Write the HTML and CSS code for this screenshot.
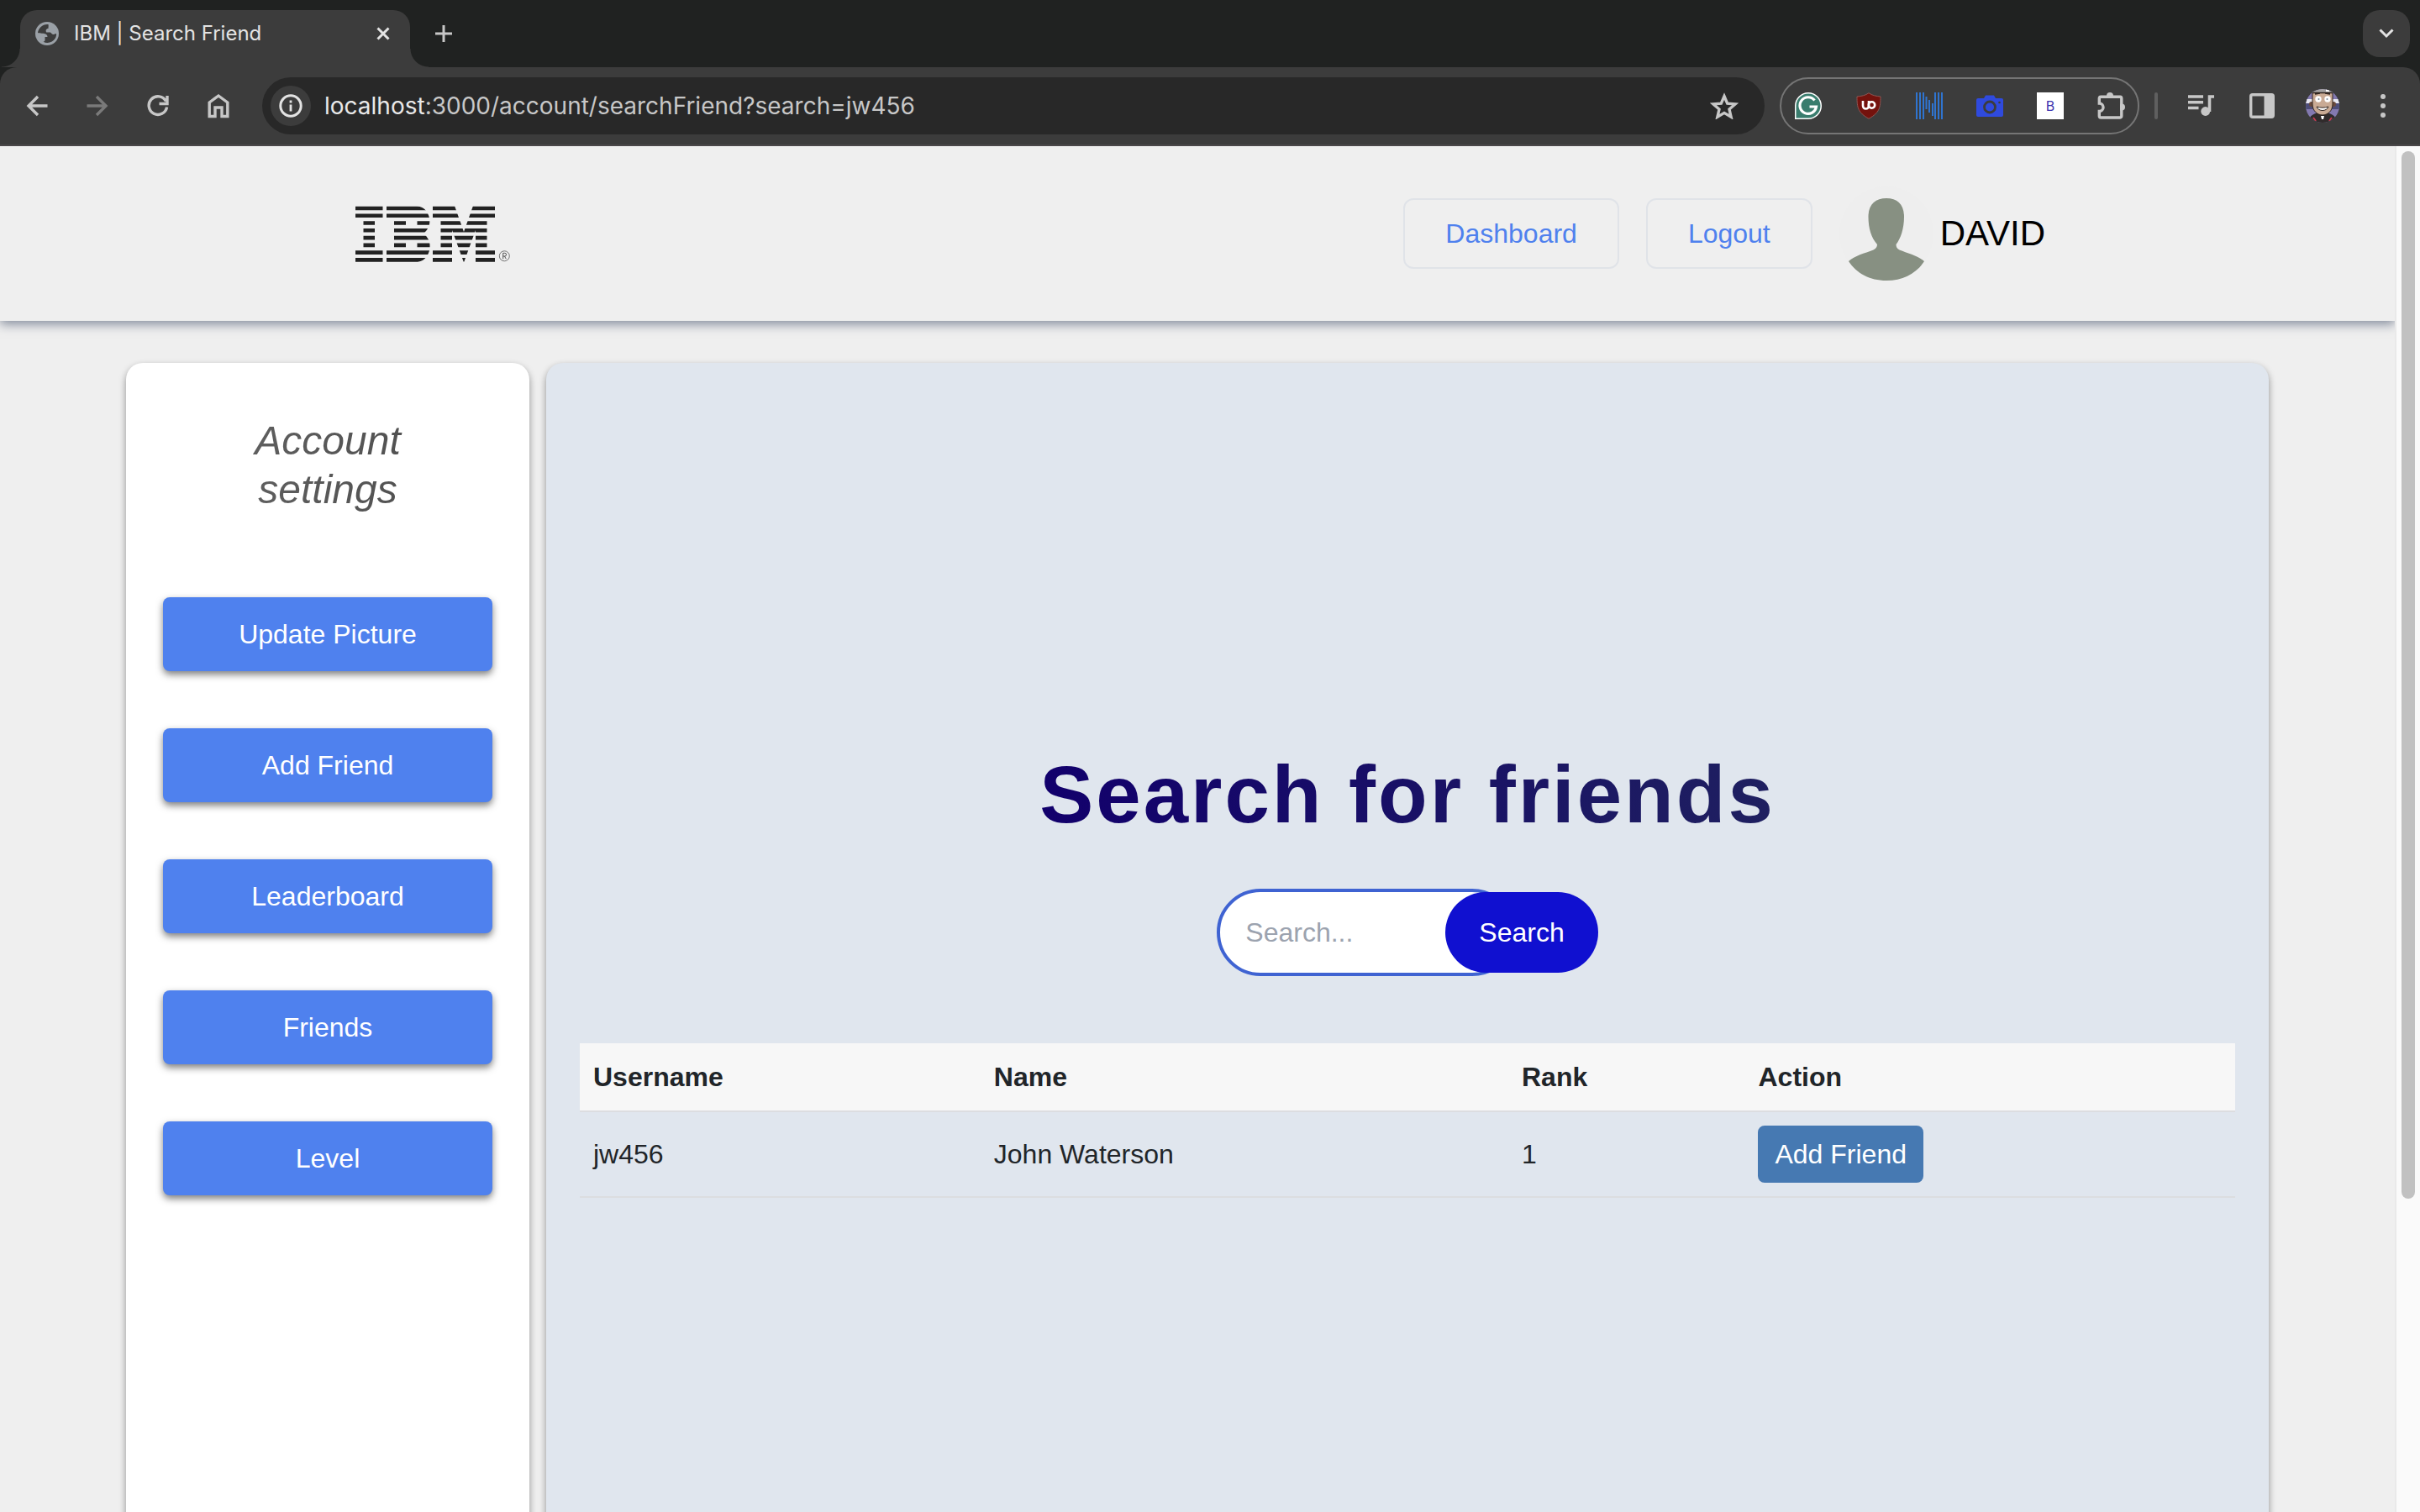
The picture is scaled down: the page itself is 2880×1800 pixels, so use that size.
FILE: index.html
```html
<!DOCTYPE html>
<html lang="en">
<head>
<meta charset="utf-8">
<meta name="viewport" content="width=device-width, initial-scale=1">
<title>IBM | Search Friend</title>
<link rel="stylesheet" href="styles.css">
</head>
<body>
<div class="browser">
  <div class="tabstrip">
    <div class="tab">
      <svg class="tab-icon" viewBox="0 0 28 28" aria-hidden="true"><circle cx="14" cy="14" r="14" fill="#9aa0a6"/><path d="M15.500 3C9 2.300 3.800 7 3 13c2 .8 4.500 .6 6.500 .8 3 .2 5 1.600 5 4.200h-3v3.500c0 1.500-.8 2-2 2.300 5 2.700 11.500 .700 14.300-4.200 1-1.800 1.400-3.800 1.200-5.600-1.500 0-2 1-3.200 1-2.600 0-2.600-2.500-4.600-2.500h-4c-1.500-3 .3-4.500 2.300-4.500 0-2 .5-3.500 0-5z" fill="#3c3c3c"/></svg>
      <span class="tab-title">IBM | Search Friend</span>
      <button class="chrome-btn tab-close" aria-label="Close tab"><svg width="16" height="16" viewBox="0 0 16 16"><path d="M1.500 1.500l13 13M14.500 1.500l-13 13" stroke="#e3e3e3" stroke-width="3"/></svg></button>
    </div>
    <button class="chrome-btn new-tab" aria-label="New tab"><svg width="20" height="20" viewBox="0 0 20 20"><path d="M10 0v20M0 10h20" stroke="#c7c7c7" stroke-width="3"/></svg></button>
    <button class="chrome-btn tab-search" aria-label="Search tabs"><svg width="18" height="12" viewBox="0 0 18 12"><path d="M1.500 1.500L9 9l7.500-7.500" fill="none" stroke="#e3e3e3" stroke-width="3"/></svg></button>
  </div>

  <div class="toolbar">
    <div class="nav-buttons">
      <button class="chrome-btn nav" aria-label="Back"><svg width="26" height="26" viewBox="0 0 26 26"><path d="M25.500 13H3M14 2L3 13l11 11" fill="none" stroke="#c7c7c7" stroke-width="3.400"/></svg></button>
      <button class="chrome-btn nav" aria-label="Forward"><svg width="26" height="26" viewBox="0 0 26 26"><path d="M.5 13H23M12 2l11 11-11 11" fill="none" stroke="#7a7a7a" stroke-width="3.400"/></svg></button>
      <button class="chrome-btn nav" aria-label="Reload"><svg width="26" height="26" viewBox="0 0 26 26"><path d="M22.500 7.500A10.800 10.800 0 1 0 23.600 14.500M24 1v9.500H14.500" fill="none" stroke="#c7c7c7" stroke-width="3.400"/></svg></button>
      <button class="chrome-btn nav" aria-label="Home"><svg width="26" height="30" viewBox="0 0 26 30"><path d="M2.200 27.500V11L13 3l10.800 8v16.500H17V17H9v10.500z" fill="none" stroke="#c7c7c7" stroke-width="3.400"/></svg></button>
    </div>
    <div class="omnibox">
      <button class="chrome-btn site-info" aria-label="Site information"><svg width="28" height="28" viewBox="0 0 28 28"><circle cx="14" cy="14" r="12.200" fill="none" stroke="#e3e3e3" stroke-width="3"/><path d="M14 12.500v8M14 7.500v3" stroke="#e3e3e3" stroke-width="2.800"/></svg></button>
      <span class="url"><b>localhost</b>:3000/account/searchFriend?search=jw456</span>
      <button class="chrome-btn star" aria-label="Bookmark"><svg width="34" height="32" viewBox="0 0 34 32"><path d="M17 4.500l3.700 8.600 9.300.8-7 6.200 2.100 9.100L17 24.400l-8.100 4.800L11 20.100l-7-6.200 9.300-.8z" fill="none" stroke="#c7c7c7" stroke-width="3.400"/></svg></button>
    </div>
    <div class="extensions">
      <svg viewBox="0 0 32 32" aria-hidden="true"><path d="M0 32V16A16 16 0 1 1 16 32z" fill="#fff"/><path d="M1.500 30.500V16A14.500 14.500 0 1 1 16 30.500z" fill="#3a7d6e"/><path d="M23.500 9.500A9.800 9.800 0 1 0 25.500 17H17.500" fill="none" stroke="#fff" stroke-width="3.200"/></svg>
      <svg viewBox="0 0 32 32" aria-hidden="true"><path d="M16 .7c4 3 9 3.800 14 4.300 0 13-1 19-14 26.300C3 24 2 18 2 5c5-.5 10-1.300 14-4.300z" fill="#74120d" stroke="#8d5653" stroke-width="1"/><path d="M9 10v6a3.500 3.500 0 0 0 7 0v-6" fill="none" stroke="#fff" stroke-width="2.600"/><circle cx="19.500" cy="15" r="3.700" fill="none" stroke="#fff" stroke-width="2.600"/></svg>
      <svg viewBox="0 0 32 32" aria-hidden="true"><path d="M1 0v32M5 0v32M9 0v32M12.500 5v15M16 9v15M20 13v15M23 0v32M27 0v32M31 0v32" stroke="#2f74d0" stroke-width="2"/></svg>
      <svg viewBox="0 0 32 32" aria-hidden="true"><path d="M2 7h7l2-3.500h10L23 7h7a2 2 0 0 1 2 2v18a2 2 0 0 1-2 2H2a2 2 0 0 1-2-2V9a2 2 0 0 1 2-2z" fill="#2f4ade"/><circle cx="16" cy="17.500" r="6.500" fill="none" stroke="#3c3c3c" stroke-width="2.800"/><circle cx="27.500" cy="12" r="1.300" fill="#3c3c3c"/></svg>
      <span class="ext-b">B</span>
      <svg class="puzzle" viewBox="0 0 34 34" aria-hidden="true"><path d="M11 5a4 4 0 0 1 8 0v2h-8zM29 14.500a4 4 0 0 1 0 8h-2v-8z" fill="#c7c7c7"/><path d="M4.200 6.200H27a2 2 0 0 1 1.800 2V29a2 2 0 0 1-1.800 2H4.200a2 2 0 0 1-1.900-2v-5.500a4.700 4.700 0 0 0 0-9.500V8.200a2 2 0 0 1 1.900-2z" fill="none" stroke="#c7c7c7" stroke-width="3.400"/></svg>
    </div>
    <span class="divider"></span>
    <div class="tools">
      <button class="chrome-btn" aria-label="Media"><svg width="32" height="26" viewBox="0 0 32 26"><path d="M0 2h18M0 8.800h18M0 15.500h12.500M25.500 20V2H31" fill="none" stroke="#c7c7c7" stroke-width="3.600"/><circle cx="20.700" cy="19.500" r="5.400" fill="#c7c7c7"/></svg></button>
      <button class="chrome-btn" aria-label="Side panel"><svg width="30" height="30" viewBox="0 0 30 30"><rect x="1.700" y="1.700" width="26.600" height="26.600" rx="2" fill="none" stroke="#c7c7c7" stroke-width="3.400"/><path d="M17.500 2H28v26H17.500z" fill="#c7c7c7"/></svg></button>
      <button class="chrome-btn" aria-label="Profile"><svg width="40" height="40" viewBox="0 0 40 40"><clipPath id="face"><circle cx="20" cy="20" r="20"/></clipPath><g clip-path="url(#face)"><path d="M0 0h40v40H0z" fill="#8379b0"/><path d="M0 12h40v5H0z" fill="#e8e8f2"/><path d="M0 17h40v7H0z" fill="#4d4d78"/><path d="M3 40c1-9 7-12 17-12s16 3 17 12z" fill="#302b2b"/><circle cx="7" cy="18" r="3" fill="#6a4a3d"/><circle cx="33" cy="18" r="3" fill="#6a4a3d"/><path d="M8 4h24v14c0 8-6 13-12 13S8 26 8 18z" fill="#c9aa94" stroke="#30251f" stroke-width="1"/><path d="M8 0h24v4H8z" fill="#a5a3a3"/><path d="M24 0h4v3h-4z" fill="#fff"/><path d="M8 4.500h24M11 6l6-1M23 5l6 1" stroke="#30251f" stroke-width="1.500"/><circle cx="15" cy="12" r="3.700" fill="#fff"/><circle cx="26" cy="12" r="3.700" fill="#fff"/><circle cx="15.500" cy="12" r="1" fill="#789"/><circle cx="25.500" cy="12" r="1" fill="#789"/><path d="M13 21c5 1.500 9 1.500 14 0-1 3-4 4.500-7 4.500s-6-1.500-7-4.500z" fill="#fff" stroke="#30251f" stroke-width="1"/><path d="M18 32h4l-1 4h-2z" fill="#fff"/><path d="M9 34l3 4M31 34l-3 4" stroke="#c33d50" stroke-width="2"/></g></svg></button>
      <button class="chrome-btn" aria-label="Menu"><svg width="6" height="28" viewBox="0 0 6 28"><g fill="#c7c7c7"><circle cx="3" cy="3" r="3"/><circle cx="3" cy="14" r="3"/><circle cx="3" cy="25" r="3"/></g></svg></button>
    </div>
  </div>

  <div class="viewport">
    <div class="page">
      <header class="site-header">
        <a class="brand" href="#" aria-label="IBM"><svg width="186" height="68" viewBox="0 0 186 68">
          <defs>
            <clipPath id="stripes"><path d="M0 1.700h170v4.600H0zM0 10.400h170V15H0zM0 19.200h170v4.600H0zM0 28h170v4.600H0zM0 36.800h170v4.600H0zM0 45.600h170v4.600H0zM0 54.300h170v4.700H0zM0 63.100h170v4.600H0z"/></clipPath>
          </defs>
          <g clip-path="url(#stripes)" fill="#222">
            <path d="M0 0h32.500v17H23v35h9.500v16H0V52h9.500V17H0z"/>
            <path fill-rule="evenodd" d="M37 1h36c6 1 11 4 13 9 2 4 2.500 7 2.300 11-.3 5-3 9-7 13 4 4 7 8 7.200 13 .3 5-.3 9-3.500 14-3 4-6 6-11 7H37V52h9V17h-9zM60 17h13.500v9H60zM60 43h13.500v9H60z"/>
            <path d="M92 1h26l11 31L140 1h26v16h-9.500v35h9.500v16h-23V30l-14 38.500L115 30v38H92V52h9.500V17H92z"/>
          </g>
          <circle cx="177.300" cy="60.800" r="6" fill="none" stroke="#555" stroke-width=".8"/>
          <path d="M175.700 64.300v-7h2a1.800 1.800 0 0 1 0 3.700h-2M177.500 61l1.800 3.300" fill="none" stroke="#444" stroke-width=".9"/>
        </svg></a>
        <nav class="site-nav">
          <a class="nav-link" href="#">Dashboard</a>
          <a class="nav-link" href="#">Logout</a>
          <div class="user">
            <svg class="avatar" viewBox="0 0 112 112" aria-hidden="true"><circle cx="56" cy="56" r="56" fill="#eee"/><path d="M56 14c13 0 21 7 21 22 0 14-4 26-9.500 33 0 3 1 5 4 6.500 10 4 22 7 29.500 13.500C92 103 76 112 56 112S20 103 11 89c7-6.500 19-9.500 29.500-13.500 3-1.500 4.500-3.500 4.500-6.500C38 61 34.500 50 34.500 36 34.500 21 43 14 56 14z" fill="#879082"/></svg>
            <span class="user-name">DAVID</span>
          </div>
        </nav>
      </header>

      <div class="layout">
        <aside class="card sidebar">
          <h2 class="sidebar-title">Account<br>settings</h2>
          <nav class="menu">
            <button class="menu-btn">Update Picture</button>
            <button class="menu-btn">Add Friend</button>
            <button class="menu-btn">Leaderboard</button>
            <button class="menu-btn">Friends</button>
            <button class="menu-btn">Level</button>
          </nav>
        </aside>
        <main class="card content">
          <h1 class="title">Search for friends</h1>
          <form class="search">
            <input class="search-input" type="text" placeholder="Search..." aria-label="Search">
            <button class="search-btn" type="button">Search</button>
          </form>
          <table class="results">
            <thead>
              <tr><th>Username</th><th>Name</th><th>Rank</th><th>Action</th></tr>
            </thead>
            <tbody>
              <tr><td>jw456</td><td>John Waterson</td><td>1</td><td><button class="add-btn">Add Friend</button></td></tr>
            </tbody>
          </table>
        </main>
      </div>
    </div>
    <div class="scrollbar"><div class="thumb"></div></div>
  </div>
</div>
</body>
</html>
```
FILE: styles.css
```css
* { box-sizing: border-box; }

body {
  margin: 0;
  font-family: "Liberation Sans", Arial, sans-serif;
  font-size: 32px;
  line-height: 48px;
  color: #212529;
}

button, input { font: inherit; }
svg { display: block; flex: none; }

.browser {
  display: flex;
  flex-direction: column;
  height: 100vh;
  overflow: hidden;
  background: #202221;
}

/* Browser window */
.chrome-btn {
  display: flex;
  flex: none;
  align-items: center;
  justify-content: center;
  padding: 0;
  border: 0;
  background: none;
}

.tabstrip {
  display: flex;
  flex: none;
  align-items: center;
  height: 80px;
  padding: 12px 12px 12px 24px;
  font-family: Inter, sans-serif;
  font-size: 24px;
}

.tab {
  position: relative;
  display: flex;
  align-items: center;
  align-self: flex-start;
  width: 464px;
  height: 68px;
  padding: 0 24px 12px 18px;
  border-radius: 20px 20px 0 0;
  background: #3c3c3c;
  color: #e3e3e3;
}

.tab::before, .tab::after {
  content: "";
  position: absolute;
  bottom: 0;
  width: 22px;
  height: 22px;
}
.tab::before { right: 100%; background: radial-gradient(circle at 0 0, transparent 21px, #3c3c3c 22px); }
.tab::after { left: 100%; background: radial-gradient(circle at 100% 0, transparent 21px, #3c3c3c 22px); }

.tab-icon { width: 28px; height: 28px; }
.tab-title { margin-left: 18px; white-space: nowrap; }
.tab-close { margin-left: auto; }
.new-tab { margin-left: 30px; }

.tab-search {
  width: 56px;
  height: 56px;
  margin-left: auto;
  border-radius: 20px;
  background: #3c3c3c;
}

.toolbar {
  display: flex;
  flex: none;
  align-items: center;
  height: 94px;
  padding: 12px 20px 12px 8px;
  border-bottom: 2px solid #4a4749;
  border-radius: 20px 20px 0 0;
  background: #3c3c3c;
}

.nav-buttons { display: flex; }
.nav { width: 72px; height: 68px; }

.omnibox {
  display: flex;
  flex: 1;
  align-items: center;
  height: 68px;
  margin-left: 16px;
  padding: 0 31px 0 10px;
  border-radius: 34px;
  background: #282828;
  font-family: Inter, sans-serif;
  font-size: 28px;
  color: #c7c7c7;
}
.omnibox b { font-weight: 400; color: #e8e8e8; }

.site-info {
  width: 48px;
  height: 48px;
  border-radius: 50%;
  background: #3c3c3c;
}
.url { margin-left: 16px; }
.star { margin-left: auto; }

.extensions {
  display: flex;
  align-items: center;
  gap: 40px;
  height: 68px;
  margin-left: 18px;
  padding: 0 14px 0 16px;
  border: 2px solid #757575;
  border-radius: 34px;
}
.extensions svg { width: 32px; height: 32px; }
.extensions .puzzle { width: 34px; height: 34px; }

.ext-b {
  width: 32px;
  background: #fff;
  color: #3b34b0;
  font-family: Inter, sans-serif;
  font-size: 16px;
  line-height: 32px;
  text-align: center;
}

.divider {
  width: 4px;
  height: 32px;
  margin: 0 16px 0 18px;
  border-radius: 2px;
  background: #5f5f5f;
}
.tools { display: flex; margin-right: -12px; }
.tools .chrome-btn { width: 72px; height: 68px; }

/* Page */
.viewport { display: flex; flex: 1; min-height: 0; }

.page {
  flex: 1;
  overflow: hidden;
  background: #efefef;
}

.scrollbar {
  flex: none;
  width: 30px;
  padding: 6px 6px 0;
  border-left: 2px solid #e9e9e9;
  background: #fafafa;
}
.thumb {
  width: 16px;
  height: 77%;
  border-radius: 8px;
  background: #c1c1c1;
}

.site-header {
  display: flex;
  align-items: center;
  justify-content: space-between;
  height: 208px;
  padding: 0 416px 0 423px;
  background: #efefef;
  box-shadow: 0 4px 12px rgba(45, 60, 90, 0.55);
}

.site-nav { display: flex; align-items: center; gap: 32px; }

.nav-link {
  padding: 16px 48px;
  border: 2px solid #e0e3e8;
  border-radius: 12px;
  color: #4f81ee;
  text-decoration: none;
}

.user { display: flex; align-items: center; gap: 8px; }
.avatar { width: 112px; height: 112px; }
.user-name { font-size: 42px; color: #000; }

.layout {
  display: flex;
  gap: 20px;
  height: 100%;
  padding: 50px 150px 0;
}

.card {
  border-radius: 20px;
  box-shadow: 0 4px 8px rgba(0, 0, 0, 0.4);
}

.sidebar {
  flex: none;
  width: 480px;
  padding: 64px 44px;
  background: #fff;
}

.sidebar-title {
  margin: 0 0 99px;
  background: linear-gradient(90deg, #666, #4a4a4a);
  background-clip: text;
  -webkit-background-clip: text;
  color: transparent;
  font-size: 48px;
  font-style: italic;
  font-weight: 400;
  line-height: 58px;
  text-align: center;
}

.menu { display: flex; flex-direction: column; gap: 68px; }

.menu-btn {
  padding: 20px;
  border: 0;
  border-radius: 8px;
  background: #4f81ee;
  box-shadow: 0 4px 8px rgba(0, 0, 0, 0.5);
  color: #fff;
}

.content {
  display: flex;
  flex: 1;
  flex-direction: column;
  align-items: center;
  padding: 456px 40px 0;
  background: #e0e6ee;
}

.title {
  margin: 0 0 54px;
  background: linear-gradient(90deg, #12006c, #1f2060);
  background-clip: text;
  -webkit-background-clip: text;
  color: transparent;
  font-size: 96px;
  letter-spacing: 3px;
  line-height: 116px;
}

.search { display: flex; align-items: center; margin: 0 0 80px; }

.search-input {
  width: 356px;
  height: 104px;
  padding: 0 30px;
  border: 4px solid #3f63d2;
  border-radius: 52px;
  background: #fff;
}
.search-input::placeholder { color: #9ca3af; opacity: 1; }

.search-btn {
  height: 96px;
  margin-left: -84px;
  padding: 0 40px;
  border: 0;
  border-radius: 48px;
  background: #1010d0;
  color: #fff;
}

.results { width: 100%; border-collapse: collapse; }
.results th, .results td {
  padding: 16px;
  border-bottom: 2px solid #dcdde0;
  text-align: left;
}
.results th { background: #f7f7f7; }

.add-btn {
  display: block;
  padding: 10px 20px;
  border: 0;
  border-radius: 8px;
  background: #4679b2;
  color: #fff;
}
```
